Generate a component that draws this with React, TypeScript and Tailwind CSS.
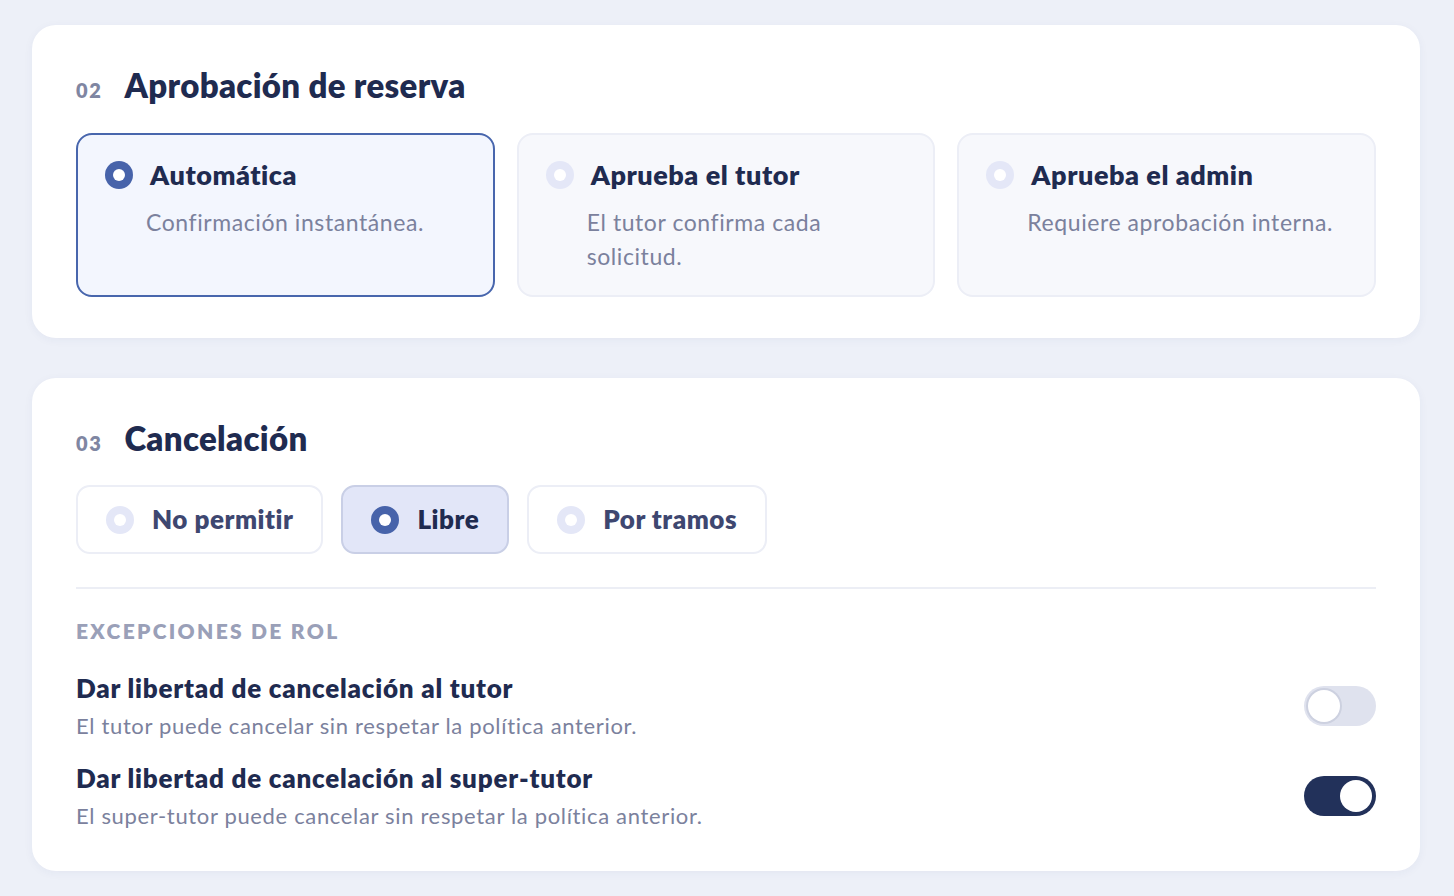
import { useState } from 'react';
import clsx from 'clsx';

const font = { fontFamily: 'Lato, "Noto Sans", sans-serif' };

const Radio = ({ checked }: { checked: boolean }) => (
    <span
        className={clsx(
            'flex h-[28px] w-[28px] shrink-0 items-center justify-center rounded-full',
            checked ? 'bg-[#4763aa]' : 'bg-[#e4e7f7]'
        )}
    >
        <span className="h-[12px] w-[12px] rounded-full bg-white" />
    </span>
);

const Toggle = ({ on, onClick }: { on: boolean; onClick: () => void }) => (
    <button
        onClick={onClick}
        className={clsx(
            'flex h-[40px] w-[72px] shrink-0 items-center rounded-full p-[4px] transition-colors',
            on ? 'justify-end bg-[#22315a]' : 'justify-start bg-[#dfe2ee]'
        )}
    >
        <span
            className={clsx(
                'h-[32px] w-[32px] rounded-full bg-white',
                !on && 'shadow-[0_0_0_2px_#cdd1e0]'
            )}
        />
    </button>
);

const SectionTitle = ({ num, title }: { num: string; title: string }) => (
    <div className="flex items-baseline gap-[22px]">
        <span className="text-[20px] font-extrabold tracking-[0.08em] text-[#7f86a2]">{num}</span>
        <h2 className="text-[33px] font-extrabold leading-none tracking-[0.01em] text-[#1f2b50]">{title}</h2>
    </div>
);

const approvals = [
    { id: 'auto', title: 'Automática', desc: 'Confirmación instantánea.' },
    { id: 'tutor', title: 'Aprueba el tutor', desc: 'El tutor confirma cada solicitud.' },
    { id: 'admin', title: 'Aprueba el admin', desc: 'Requiere aprobación interna.' },
];

const cancelModes = [
    { id: 'none', label: 'No permitir' },
    { id: 'free', label: 'Libre' },
    { id: 'tiers', label: 'Por tramos' },
];

export default function App() {
    const [approval, setApproval] = useState('auto');
    const [cancel, setCancel] = useState('free');
    const [tutorFree, setTutorFree] = useState(false);
    const [superFree, setSuperFree] = useState(true);

    const exceptions = [
        {
            title: 'Dar libertad de cancelación al tutor',
            desc: 'El tutor puede cancelar sin respetar la política anterior.',
            on: tutorFree,
            toggle: () => setTutorFree((v) => !v),
        },
        {
            title: 'Dar libertad de cancelación al super-tutor',
            desc: 'El super-tutor puede cancelar sin respetar la política anterior.',
            on: superFree,
            toggle: () => setSuperFree((v) => !v),
        },
    ];

    return (
        <div style={font} className="min-h-screen bg-[#edf0f8] pt-[25px] pr-[34px] pb-[26px] pl-[32px]">
            <div className="flex flex-col gap-[40px]">
                <section className="rounded-[24px] bg-white px-[44px] pt-[44px] pb-[41px] shadow-[0_2px_10px_rgba(40,55,110,0.05)]">
                    <SectionTitle num="02" title="Aprobación de reserva" />
                    <div className="mt-[28px] grid grid-cols-3 gap-[22px]">
                        {approvals.map((opt) => {
                            const active = approval === opt.id;
                            return (
                                <button
                                    key={opt.id}
                                    onClick={() => setApproval(opt.id)}
                                    className={clsx(
                                        'flex h-[164px] flex-col rounded-[16px] border-2 px-[27px] pt-[23px] text-left',
                                        active
                                            ? 'border-[#4866ad] bg-[#f3f6fe]'
                                            : 'border-[#eceef6] bg-[#f7f8fc]'
                                    )}
                                >
                                    <div className="flex items-center gap-[17px]">
                                        <Radio checked={active} />
                                        <span className="text-[27px] leading-[34px] font-extrabold tracking-[0.02em] text-[#1f2b50]">
                                            {opt.title}
                                        </span>
                                    </div>
                                    <p className="mt-[13px] pl-[41px] text-[23px] leading-[34px] tracking-[0.025em] text-[#7b819d]">
                                        {opt.desc}
                                    </p>
                                </button>
                            );
                        })}
                    </div>
                </section>

                <section className="rounded-[24px] bg-white px-[44px] pt-[44px] pb-[40px] shadow-[0_2px_10px_rgba(40,55,110,0.05)]">
                    <SectionTitle num="03" title="Cancelación" />
                    <div className="mt-[27px] flex gap-[18px]">
                        {cancelModes.map((m) => {
                            const active = cancel === m.id;
                            return (
                                <button
                                    key={m.id}
                                    onClick={() => setCancel(m.id)}
                                    className={clsx(
                                        'flex h-[69px] items-center gap-[18px] rounded-[14px] border-2 pr-[28px] pl-[28px]',
                                        active
                                            ? 'border-[#c9cfe6] bg-[#e2e6f8]'
                                            : 'border-[#eceef6] bg-white'
                                    )}
                                >
                                    <Radio checked={active} />
                                    <span
                                        className={clsx(
                                            'text-[26px] font-extrabold tracking-[0.02em]',
                                            active ? 'text-[#1f2b50]' : 'text-[#3e4770]'
                                        )}
                                    >
                                        {m.label}
                                    </span>
                                </button>
                            );
                        })}
                    </div>

                    <div className="mt-[33px] border-t-2 border-[#eceef5] pt-[26px]">
                        <p className="text-[21px] font-extrabold tracking-[0.11em] text-[#9aa0b8] uppercase">
                            Excepciones de rol
                        </p>
                        <div className="mt-[24px] flex flex-col gap-[20px]">
                            {exceptions.map((ex) => (
                                <div key={ex.title} className="flex items-center justify-between">
                                    <div className="flex flex-col">
                                        <span className="text-[26px] leading-[34px] font-extrabold tracking-[0.03em] text-[#1f2b50]">
                                            {ex.title}
                                        </span>
                                        <span className="mt-[6px] text-[22px] leading-[30px] tracking-[0.03em] text-[#7b819d]">
                                            {ex.desc}
                                        </span>
                                    </div>
                                    <Toggle on={ex.on} onClick={ex.toggle} />
                                </div>
                            ))}
                        </div>
                    </div>
                </section>
            </div>
        </div>
    );
}
